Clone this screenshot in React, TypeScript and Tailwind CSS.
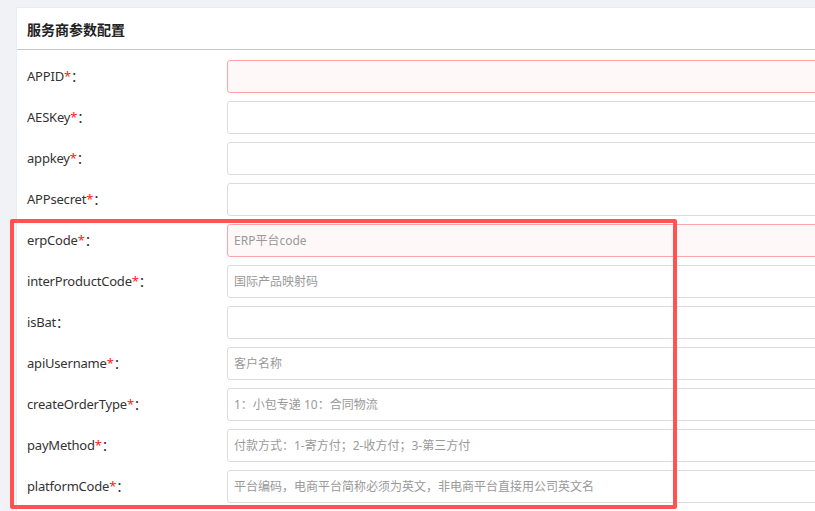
import React from 'react'

interface Field {
  name: string
  required: boolean
  placeholder?: string
  error?: boolean
}

const fields: Field[] = [
  { name: 'APPID', required: true, error: true },
  { name: 'AESKey', required: true },
  { name: 'appkey', required: true },
  { name: 'APPsecret', required: true },
  { name: 'erpCode', required: true, placeholder: 'ERP平台code', error: true },
  { name: 'interProductCode', required: true, placeholder: '国际产品映射码' },
  { name: 'isBat', required: false },
  { name: 'apiUsername', required: true, placeholder: '客户名称' },
  { name: 'createOrderType', required: true, placeholder: '1：小包专递 10：合同物流' },
  { name: 'payMethod', required: true, placeholder: '付款方式：1-寄方付；2-收方付；3-第三方付' },
  { name: 'platformCode', required: true, placeholder: '平台编码，电商平台简称必须为英文，非电商平台直接用公司英文名' },
]

const font = { fontFamily: '"Noto Sans", "Noto Sans CJK SC", sans-serif' }

export default function App() {
  return (
    <div className="relative w-[815px] h-[511px] overflow-hidden bg-[#f0f2f5] pt-[7px] pl-4" style={font}>
      <div className="w-[900px] h-[600px] bg-white border border-[#e3eef7]">
        {/* 标题栏 */}
        <div className="h-[42px] flex items-center pl-[10px] pt-[2px] border-b border-[#c8c8c8]">
          <span className="text-[14px] font-bold text-[#222]">服务商参数配置</span>
        </div>
        <div className="flex flex-col gap-2 pt-[10px]">
          {fields.map((f) => (
            <div key={f.name} className="flex items-center h-[33px]">
              <div className="w-[210px] pl-[10px] text-[13px] tracking-[-0.2px] text-[#333]">
                {f.name}
                {f.required && <span className="text-[#ff2020]">*</span>}
                <span>：</span>
              </div>
              <div
                className={`flex-1 h-[33px] rounded-[3px] border flex items-center pl-[6px] text-[12px] text-[#999] ${
                  f.error ? 'border-[#ffa4a4] bg-[#fff8f8]' : 'border-[#dcdcdc] bg-white'
                }`}
              >
                {f.placeholder}
              </div>
            </div>
          ))}
        </div>
      </div>
      {/* 标注框 */}
      <div className="absolute left-[10px] top-[219px] w-[667px] h-[290px] border-4 border-[#ff5252] rounded-[2px]" />
    </div>
  )
}
